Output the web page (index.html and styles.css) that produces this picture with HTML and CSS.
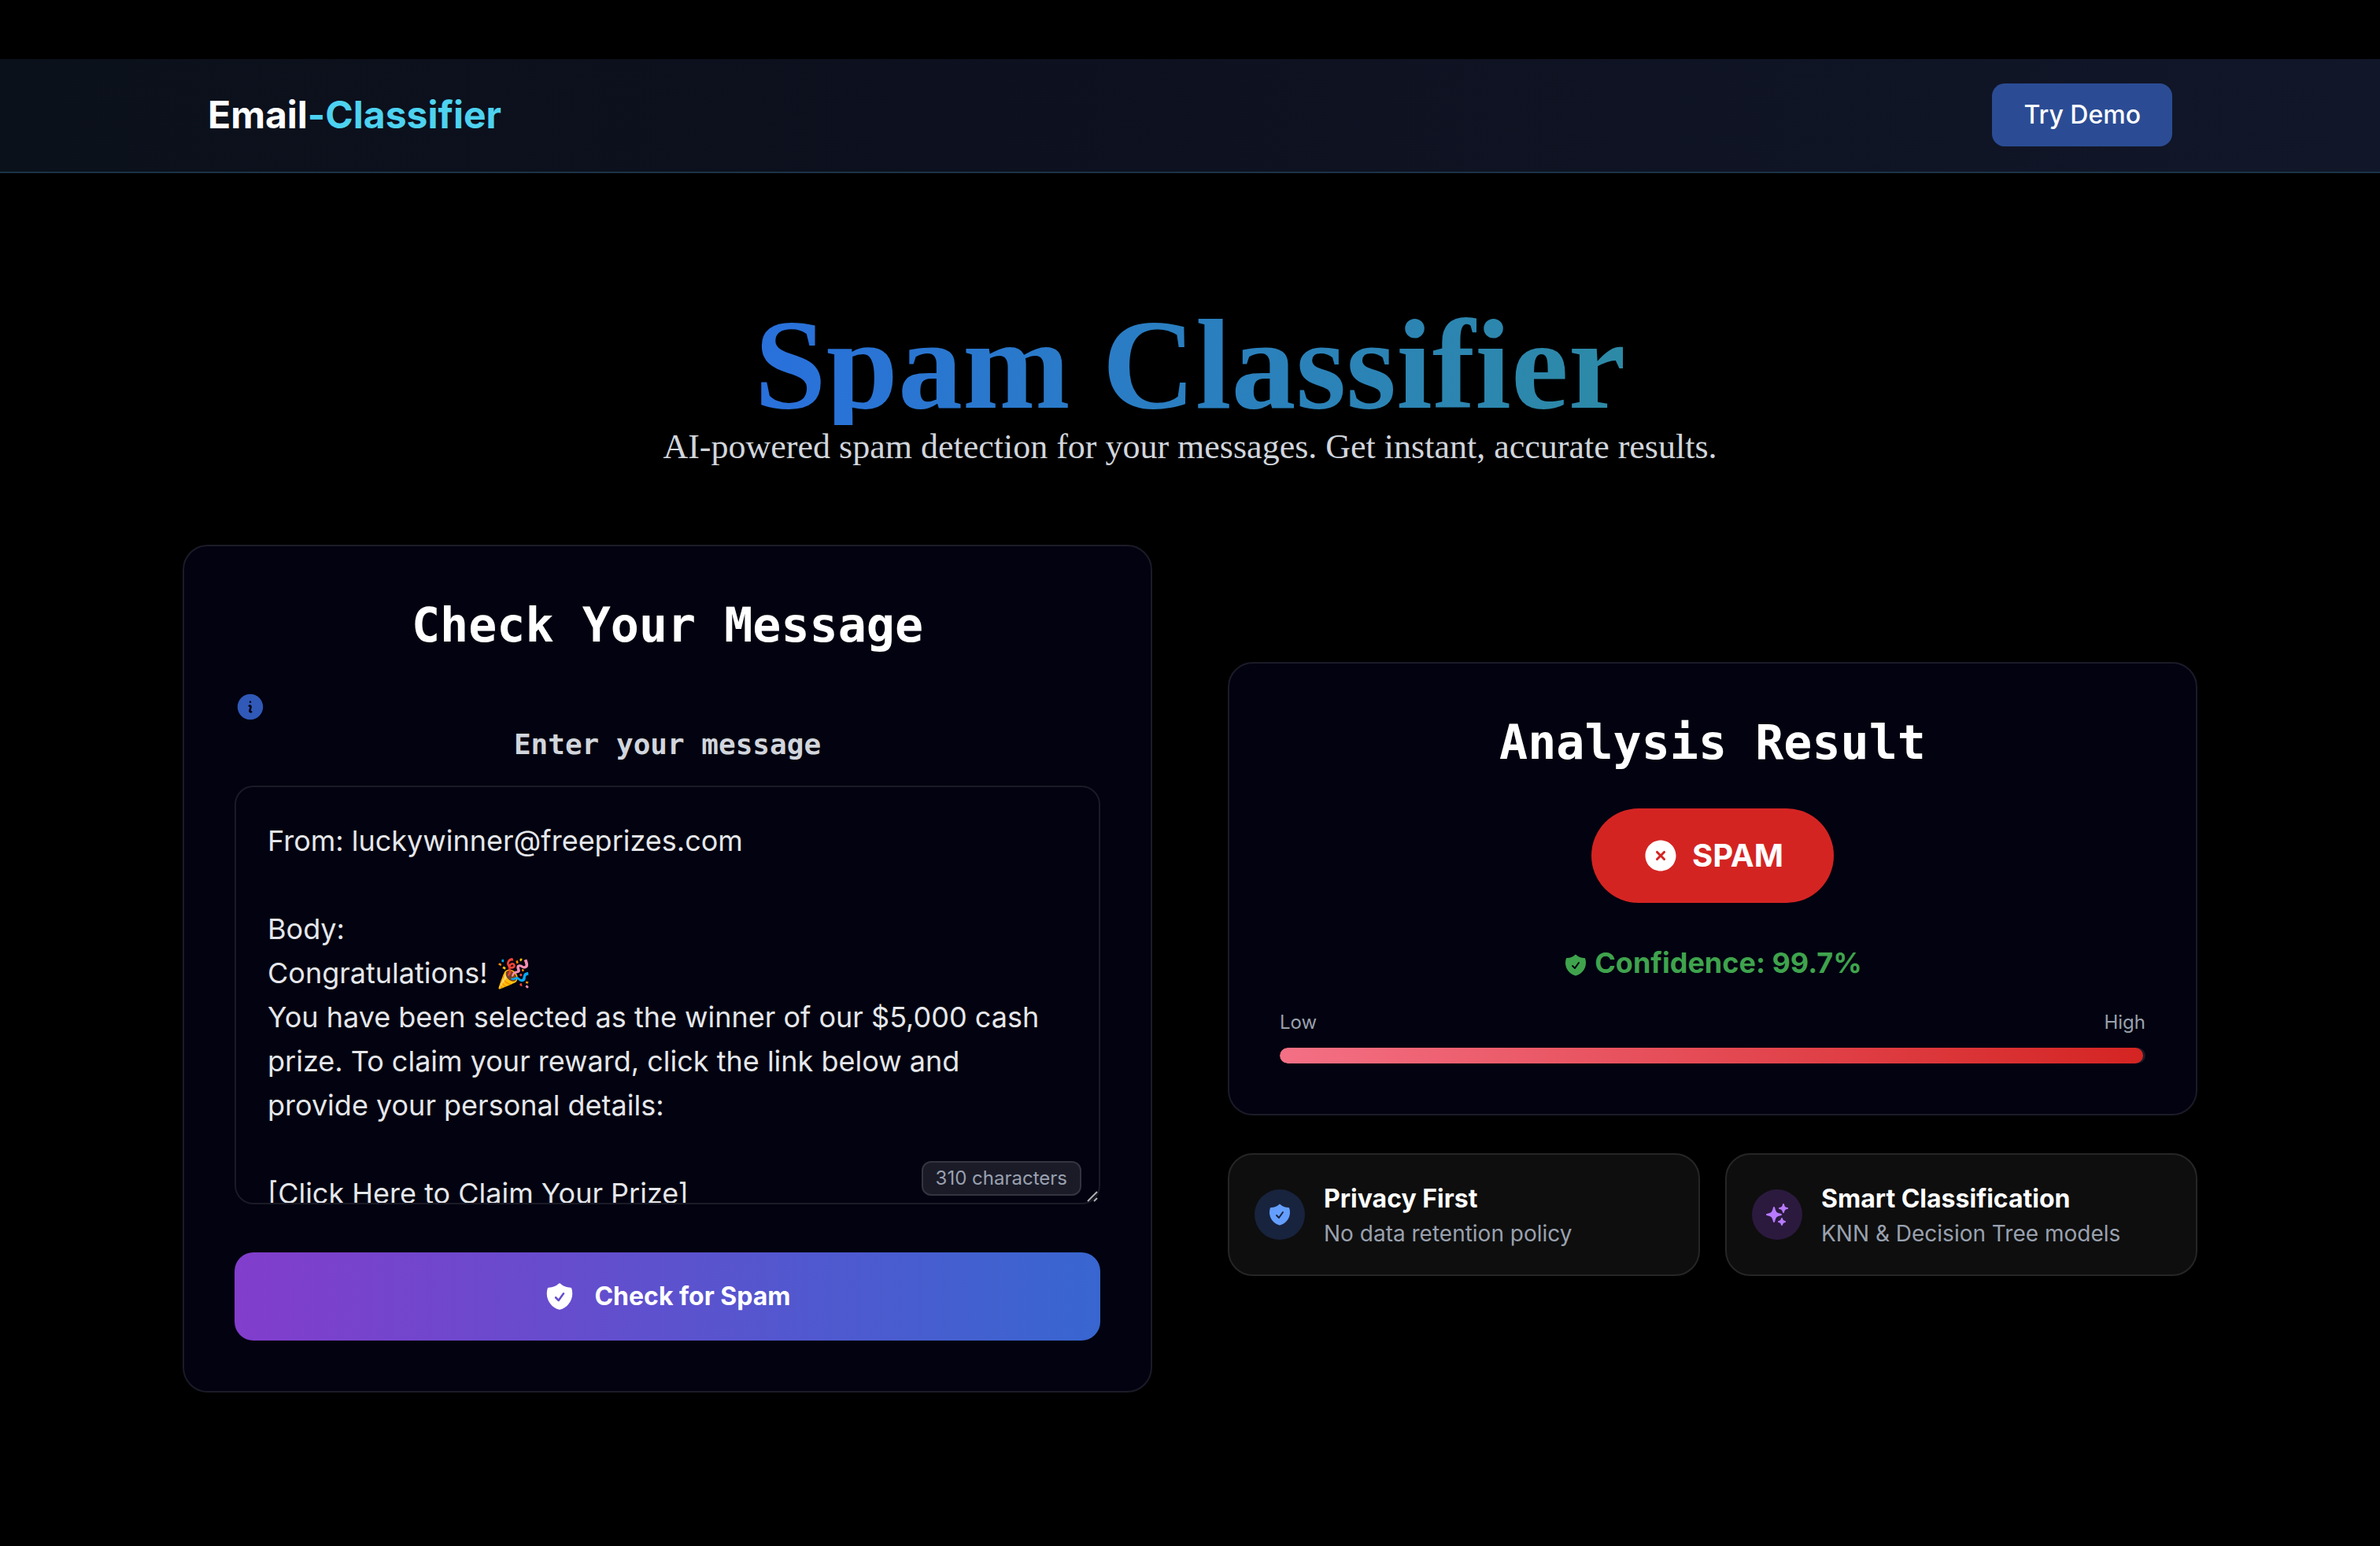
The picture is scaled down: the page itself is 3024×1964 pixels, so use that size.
FILE: index.html
```html
<!DOCTYPE html>
<html lang="en">
<head>
<meta charset="utf-8">
<meta name="viewport" content="width=device-width, initial-scale=1">
<title>Email-Classifier</title>
<link rel="stylesheet" href="styles.css">
</head>
<body>
<svg class="sprite" aria-hidden="true">
  <symbol id="icon-shield" viewBox="0 0 24 24"><path fill-rule="evenodd" clip-rule="evenodd" d="M12.516 2.17a.75.75 0 0 0-1.032 0 11.209 11.209 0 0 1-7.877 3.08.75.75 0 0 0-.722.515A12.74 12.74 0 0 0 2.25 9.75c0 5.942 4.064 10.933 9.563 12.348a.749.749 0 0 0 .374 0c5.499-1.415 9.563-6.406 9.563-12.348 0-1.39-.223-2.73-.635-3.985a.75.75 0 0 0-.722-.516l-.143.001c-2.996 0-5.717-1.17-7.734-3.08Zm3.094 8.016a.75.75 0 1 0-1.22-.872l-3.236 4.53L9.53 12.22a.75.75 0 0 0-1.06 1.06l2.25 2.25a.75.75 0 0 0 1.14-.094l3.75-5.25Z"/></symbol>
  <symbol id="icon-info" viewBox="0 0 24 24"><path fill-rule="evenodd" clip-rule="evenodd" d="M2.25 12c0-5.385 4.365-9.75 9.75-9.75s9.75 4.365 9.75 9.75-4.365 9.75-9.75 9.75S2.25 17.385 2.25 12Zm8.706-1.442c1.146-.573 2.437.463 2.126 1.706l-.709 2.836.042-.02a.75.75 0 0 1 .67 1.34l-.04.022c-1.147.573-2.438-.463-2.127-1.706l.71-2.836-.042.02a.75.75 0 1 1-.671-1.34l.041-.022ZM12 9a.75.75 0 1 0 0-1.5.75.75 0 0 0 0 1.5Z"/></symbol>
  <symbol id="icon-cross" viewBox="0 0 24 24"><path fill-rule="evenodd" clip-rule="evenodd" d="M12 2.25c-5.385 0-9.75 4.365-9.75 9.75s4.365 9.75 9.75 9.75 9.75-4.365 9.75-9.75S17.385 2.25 12 2.25Zm-1.72 6.97a.75.75 0 1 0-1.06 1.06L10.94 12l-1.72 1.72a.75.75 0 1 0 1.06 1.06L12 13.06l1.72 1.72a.75.75 0 1 0 1.06-1.06L13.06 12l1.72-1.72a.75.75 0 1 0-1.06-1.06L12 10.94l-1.72-1.72Z"/></symbol>
  <symbol id="icon-sparkles" viewBox="0 0 24 24"><path fill-rule="evenodd" clip-rule="evenodd" d="M9 4.5a.75.75 0 0 1 .721.544l.813 2.846a3.75 3.75 0 0 0 2.576 2.576l2.846.813a.75.75 0 0 1 0 1.442l-2.846.813a3.75 3.75 0 0 0-2.576 2.576l-.813 2.846a.75.75 0 0 1-1.442 0l-.813-2.846a3.75 3.75 0 0 0-2.576-2.576l-2.846-.813a.75.75 0 0 1 0-1.442l2.846-.813A3.75 3.75 0 0 0 7.466 7.89l.813-2.846A.75.75 0 0 1 9 4.5ZM18 1.5a.75.75 0 0 1 .728.568l.258 1.036c.236.94.97 1.674 1.91 1.91l1.036.258a.75.75 0 0 1 0 1.456l-1.036.258c-.94.236-1.674.97-1.91 1.91l-.258 1.036a.75.75 0 0 1-1.456 0l-.258-1.036a2.625 2.625 0 0 0-1.91-1.91l-1.036-.258a.75.75 0 0 1 0-1.456l1.036-.258a2.625 2.625 0 0 0 1.91-1.91l.258-1.036A.75.75 0 0 1 18 1.5ZM16.5 15a.75.75 0 0 1 .712.513l.394 1.183c.15.447.5.799.948.948l1.183.395a.75.75 0 0 1 0 1.422l-1.183.395c-.447.15-.799.5-.948.948l-.395 1.183a.75.75 0 0 1-1.422 0l-.395-1.183a1.5 1.5 0 0 0-.948-.948l-1.183-.395a.75.75 0 0 1 0-1.422l1.183-.395c.447-.15.799-.5.948-.948l.395-1.183A.75.75 0 0 1 16.5 15Z"/></symbol>
</svg>

<header class="navbar">
  <div class="navbar-inner">
    <a class="brand" href="#">Email<span class="brand-accent">-Classifier</span></a>
    <button class="demo-button" type="button">Try Demo</button>
  </div>
</header>

<main class="page">
  <section class="hero">
    <h1 class="hero-title">Spam Classifier</h1>
    <p class="hero-text">AI-powered spam detection for your messages. Get instant, accurate results.</p>
  </section>

  <div class="columns">
    <form class="card">
      <h2 class="card-title">Check Your Message</h2>
      <svg class="icon info-icon" aria-hidden="true"><use href="#icon-info"/></svg>
      <label class="field-label" for="message">Enter your message</label>
      <div class="field">
        <textarea class="field-input" id="message" spellcheck="false">From: luckywinner@freeprizes.com

Body:
Congratulations! 🎉
You have been selected as the winner of our $5,000 cash prize. To claim your reward, click the link below and provide your personal details:

[Click Here to Claim Your Prize]</textarea>
        <span class="counter">310 characters</span>
        <svg class="grip" viewBox="0 0 14 14" aria-hidden="true"><path d="M1 13 13 1M9 13l4-4"/></svg>
      </div>
      <button class="submit-button" type="submit">
        <svg class="icon" aria-hidden="true"><use href="#icon-shield"/></svg>
        Check for Spam
      </button>
    </form>

    <div class="results">
      <section class="card">
        <h2 class="card-title">Analysis Result</h2>
        <div class="verdict">
          <svg class="icon icon-large" aria-hidden="true"><use href="#icon-cross"/></svg>
          SPAM
        </div>
        <p class="confidence"><svg class="icon icon-small" aria-hidden="true"><use href="#icon-shield"/></svg>Confidence: 99.7%</p>
        <div class="scale"><span>Low</span><span>High</span></div>
        <div class="meter"><div class="meter-fill" style="width: 99.7%"></div></div>
      </section>

      <div class="features">
        <article class="feature">
          <span class="feature-icon feature-icon-blue"><svg class="icon icon-small" aria-hidden="true"><use href="#icon-shield"/></svg></span>
          <div>
            <h3 class="feature-title">Privacy First</h3>
            <p class="feature-text">No data retention policy</p>
          </div>
        </article>
        <article class="feature">
          <span class="feature-icon feature-icon-purple"><svg class="icon icon-small" aria-hidden="true"><use href="#icon-sparkles"/></svg></span>
          <div>
            <h3 class="feature-title">Smart Classification</h3>
            <p class="feature-text">KNN &amp; Decision Tree models</p>
          </div>
        </article>
      </div>
    </div>
  </div>
</main>
</body>
</html>
```
FILE: styles.css
```css
* {
  box-sizing: border-box;
}

body {
  margin: 0;
  padding-top: 75px;
  min-height: 100vh;
  background: #000;
  color: #fff;
  font-family: Inter, "Liberation Sans", sans-serif;
  font-size: 32px;
  line-height: 48px;
}

h1, h2, h3, p {
  margin: 0;
}

button, textarea {
  font: inherit;
  color: inherit;
}

.sprite {
  position: absolute;
  width: 0;
  height: 0;
}

.icon {
  width: 40px;
  height: 40px;
  flex-shrink: 0;
  fill: currentColor;
}

.icon-small {
  width: 32px;
  height: 32px;
}

.icon-large {
  width: 48px;
  height: 48px;
}

/* Navigation */

.navbar {
  padding: 31px 0 32px;
  border-bottom: 2px solid #1a3347;
  background: linear-gradient(to right, #0b111b, #0d101e 40%, #111729);
}

.navbar-inner {
  display: flex;
  align-items: center;
  justify-content: space-between;
  max-width: 2560px;
  margin: 0 auto;
  padding: 0 32px;
}

.brand {
  color: #fff;
  font-size: 48px;
  font-weight: 700;
  line-height: 64px;
  text-decoration: none;
}

.brand-accent {
  color: #4dd2f0;
}

.demo-button {
  padding: 16px 40px;
  border: 0;
  border-radius: 16px;
  background: #2b4c94;
  font-weight: 500;
}

/* Hero */

.page {
  max-width: 2560px;
  margin: 0 auto;
  padding: 176px 0;
}

.hero {
  display: flex;
  flex-direction: column;
  align-items: center;
  margin-bottom: 96px;
  font-family: Georgia, "Liberation Serif", serif;
  text-align: center;
}

.hero-title {
  padding-bottom: 10px;
  background: linear-gradient(to right, #2970dc, #2a7fc0 50%, #2d8aa6);
  background-clip: text;
  -webkit-background-clip: text;
  color: transparent;
  font-size: 164px;
  font-weight: 700;
  line-height: 134px;
}

.hero-text {
  color: #d1d5dc;
  font-size: 44px;
  line-height: 56px;
}

/* Cards */

.columns {
  display: grid;
  grid-template-columns: 1fr 1fr;
  align-items: center;
  gap: 96px;
}

.card {
  display: flex;
  flex-direction: column;
  padding: 64px;
  border: 2px solid #1b1b28;
  border-radius: 32px;
  background: #020210;
}

.card-title {
  margin-bottom: 48px;
  font-family: Menlo, "DejaVu Sans Mono", monospace;
  font-size: 60px;
  font-weight: 700;
  line-height: 72px;
  text-align: center;
}

.info-icon {
  color: #3059b8;
}

.field-label {
  margin-bottom: 24px;
  color: #d1d5dc;
  font-family: Menlo, "DejaVu Sans Mono", monospace;
  font-size: 36px;
  font-weight: 700;
  line-height: 56px;
  text-align: center;
}

.field {
  position: relative;
  margin-bottom: 48px;
  padding-bottom: 13px;
}

.field-input {
  display: block;
  width: 100%;
  height: 532px;
  padding: 40px;
  border: 2px solid #1b1b28;
  border-radius: 24px;
  outline: 0;
  background: transparent;
  color: #e5e7eb;
  font-size: 36px;
  line-height: 56px;
  resize: none;
  scrollbar-width: none;
}

.counter {
  position: absolute;
  right: 24px;
  bottom: 24px;
  padding: 4px 16px;
  border: 2px solid #343441;
  border-radius: 12px;
  background: #1b1b28;
  color: #99a1af;
  font-size: 24px;
  line-height: 32px;
}

.grip {
  position: absolute;
  right: 3px;
  bottom: 16px;
  width: 14px;
  height: 14px;
  fill: none;
  stroke: #b0b0b4;
  stroke-width: 2;
}

.submit-button {
  display: flex;
  align-items: center;
  justify-content: center;
  gap: 24px;
  padding: 32px;
  border: 0;
  border-radius: 24px;
  background: linear-gradient(to right, #823dcc, #3866d0);
  font-weight: 700;
}

/* Result */

.results {
  display: grid;
  gap: 48px;
}

.verdict {
  display: flex;
  align-items: center;
  align-self: center;
  gap: 16px;
  margin-bottom: 48px;
  padding: 32px 64px;
  border-radius: 60px;
  background: #d42422;
  font-size: 40px;
  font-weight: 700;
  line-height: 56px;
}

.confidence {
  margin-bottom: 32px;
  color: #3fa34d;
  font-size: 36px;
  font-weight: 700;
  line-height: 56px;
  text-align: center;
}

.confidence .icon {
  margin-right: 8px;
  vertical-align: middle;
}

.scale {
  display: flex;
  justify-content: space-between;
  margin-bottom: 16px;
  color: #99a1af;
  font-size: 24px;
  line-height: 32px;
}

.meter {
  height: 20px;
  overflow: hidden;
  border-radius: 10px;
  background: #1b1b28;
}

.meter-fill {
  height: 100%;
  border-radius: 10px;
  background: linear-gradient(to right, #f47085, #d42422);
}

/* Features */

.features {
  display: grid;
  grid-template-columns: 1fr 1fr;
  gap: 32px;
}

.feature {
  display: flex;
  align-items: center;
  gap: 24px;
  padding: 32px;
  border: 2px solid #262626;
  border-radius: 32px;
  background: #0e0e0e;
}

.feature-icon {
  display: grid;
  place-items: center;
  width: 64px;
  height: 64px;
  border-radius: 32px;
}

.feature-icon-blue {
  background: #18233e;
  color: #649fff;
}

.feature-icon-purple {
  background: #2b1a3e;
  color: #b87aff;
}

.feature-title {
  font-size: 32px;
  font-weight: 700;
  line-height: 48px;
}

.feature-text {
  color: #99a1af;
  font-size: 28px;
  line-height: 40px;
}
```
